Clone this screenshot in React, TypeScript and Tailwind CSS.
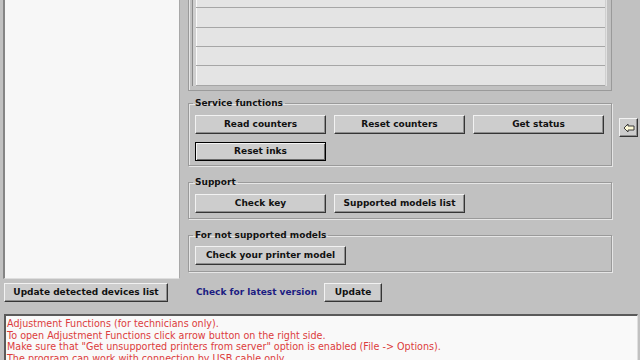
import type { ReactNode } from 'react';

const FONT = "font-['DejaVu_Sans',sans-serif]";

const LIST_ROWS = ['h-[8px]', 'h-[20px]', 'h-[19px]', 'h-[19px]', 'h-[20px]'];

const LOG_LINES = [
    'Adjustment Functions (for technicians only).',
    'To open Adjustment Functions click arrow button on the right side.',
    'Make sure that "Get unsupported printers from server" option is enabled (File -> Options).',
    'The program can work with connection by USB cable only.',
];

function Btn({ children, className = '', focused = false }: { children: ReactNode; className?: string; focused?: boolean }) {
    const edge = focused
        ? 'border-black shadow-[inset_1px_1px_0_#f4f4f4,inset_-1px_-1px_0_#6a6a6a]'
        : 'border-t-[#f2f2f2] border-l-[#f2f2f2] border-b-[#353535] border-r-[#353535] shadow-[inset_-1px_-1px_0_#8e8e8e]';
    return (
        <button className={`h-[19px] flex items-center justify-center bg-[#cdcdcd] text-[9px] font-bold leading-none text-[#111] border ${edge} ${className}`}>
            {children}
        </button>
    );
}

function Group({ title, children, className = '' }: { title: string; children: ReactNode; className?: string }) {
    return (
        <fieldset className={`border border-[#9a9a9a] shadow-[inset_1px_1px_0_#e6e6e6,1px_1px_0_#e6e6e6] px-[6px] ${className}`}>
            <legend className="-ml-[2px] px-[2px] text-[9px] font-bold leading-[11px] text-[#111]">{title}</legend>
            {children}
        </fieldset>
    );
}

function ArrowIcon() {
    return (
        <svg width="12" height="10" viewBox="0 0 12 10">
            <polygon points="1,5 5,1 5,3 11,3 11,7 5,7 5,9" fill="#fffbd8" stroke="#3a3a3a" strokeWidth="1" strokeLinejoin="miter" />
        </svg>
    );
}

export default function App() {
    return (
        <div className={`w-[640px] h-[360px] overflow-hidden bg-[#c1c1c1] flex flex-col ${FONT}`}>
            <div className="flex">
                {/* detected devices */}
                <div className="ml-[3px] w-[177px] h-[279px] bg-[#f7f7f7] border-l-2 border-b border-r border-l-[#858585] border-b-[#dedede] border-r-[#a8a8a8]" />

                <div className="ml-[8px] w-[424px] flex flex-col">
                    <div className="h-[91px] border-l border-r border-b border-[#9a9a9a] shadow-[inset_1px_0_0_#e6e6e6] pl-[3px] pr-[4px] pb-[4px]">
                        <div className="h-[86px] border-l border-r border-l-[#8a8a8a] border-r-[#e0e0e0] pl-[3px] pr-[1px] bg-[#cfcfcf]">
                            {LIST_ROWS.map((h, i) => (
                                <div key={i} className={`${h} bg-[#e4e4e4] border-b border-[#a6a6a6] shadow-[inset_1px_0_0_#fafafa]`} />
                            ))}
                        </div>
                    </div>

                    <Group title="Service functions" className="mt-[7px] pb-[4px]">
                        <div className="pt-[6px] flex flex-col gap-[8px]">
                            <div className="flex gap-[8px]">
                                <Btn className="w-[131px]">Read counters</Btn>
                                <Btn className="w-[131px]">Reset counters</Btn>
                                <Btn className="w-[131px]">Get status</Btn>
                            </div>
                            <div className="flex">
                                <Btn className="w-[131px]" focused>Reset inks</Btn>
                            </div>
                        </div>
                    </Group>

                    <Group title="Support" className="mt-[11px] pb-[5px]">
                        <div className="pt-[6px] flex gap-[8px]">
                            <Btn className="w-[131px]">Check key</Btn>
                            <Btn className="w-[131px]">Supported models list</Btn>
                        </div>
                    </Group>

                    <Group title="For not supported models" className="mt-[11px] pb-[6px]">
                        <div className="pt-[5px] flex">
                            <Btn className="w-[151px]">Check your printer model</Btn>
                        </div>
                    </Group>
                </div>

                <div className="ml-[7px] mt-[118px]">
                    <Btn className="w-[19px]">
                        <ArrowIcon />
                    </Btn>
                </div>
            </div>

            <div className="mt-[4px] flex items-center h-[19px]">
                <Btn className="ml-[4px] w-[164px]">Update detected devices list</Btn>
                <span className="ml-[28px] text-[9px] font-bold leading-none text-[#1c1c82]">Check for latest version</span>
                <Btn className="ml-[7px] w-[58px]">Update</Btn>
            </div>

            <div className="mt-[12px] ml-[4px] w-[634px] h-[60px] shrink-0 bg-[#f9f9f9] border-t-2 border-l-2 border-t-[#5a5a5a] border-l-[#5a5a5a] border-r border-r-[#e0e0e0] pl-[1px] pt-[2px]">
                {LOG_LINES.map(line => (
                    <div key={line} className="text-[9.6px] leading-[11.7px] text-[#dc3c3c] whitespace-nowrap">
                        {line}
                    </div>
                ))}
            </div>
        </div>
    );
}
